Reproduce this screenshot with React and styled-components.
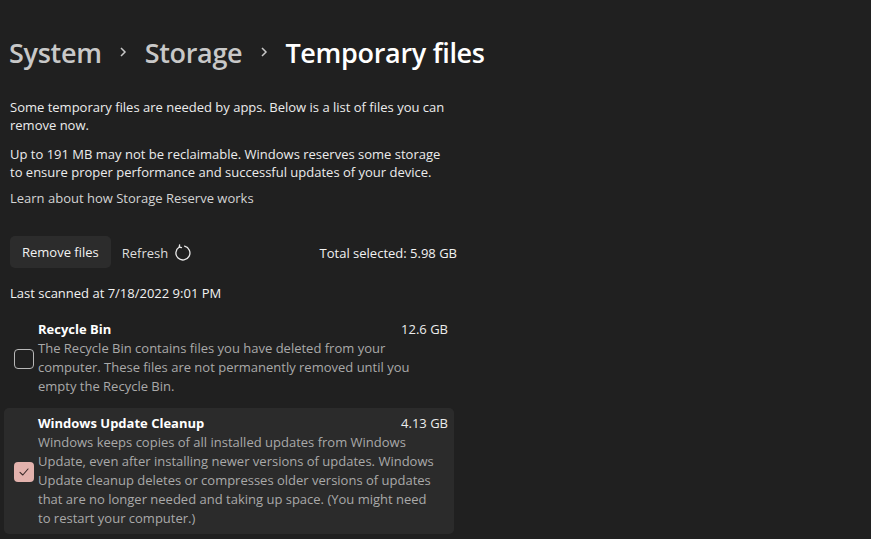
import React from "react";
import styled, { createGlobalStyle } from "styled-components";

const Global = createGlobalStyle`
  html, body { margin: 0; padding: 0; background: #202020; }
  body { font-family: "Segoe UI", "Open Sans", sans-serif; color: #ffffff; }
`;

const Page = styled.div`
  width: 871px;
  height: 539px;
  overflow: hidden;
  background: #202020;
  box-sizing: border-box;
  padding: 33px 0 0 0;
`;

const Column = styled.div`
  width: 460px;
  display: flex;
  flex-direction: column;
`;

const Breadcrumb = styled.div`
  display: flex;
  align-items: center;
  white-space: nowrap;
  width: 600px;
  padding-left: 9px;
  height: 38px;
  font-size: 27px;
  font-weight: 600;
  letter-spacing: -0.3px;
`;

const Crumb = styled.span`
  color: ${(p) => (p.$current ? "#ffffff" : "#c8c8c8")};
`;

const Chevron = styled.span`
  display: inline-flex;
  width: 43px;
  justify-content: center;
  color: #c8c8c8;
`;

const Paragraph = styled.p`
  margin: ${(p) => p.$mt || 0}px 0 0 10px;
  font-size: 13px;
  line-height: 18px;
  color: #ececec;
  width: ${(p) => p.$w || 450}px;
`;

const Link = styled.div`
  margin: 8px 0 0 10px;
  font-size: 13px;
  line-height: 18px;
  color: #d4d4d4;
`;

const Toolbar = styled.div`
  display: flex;
  align-items: center;
  margin-top: 29px;
  padding-left: 10px;
  height: 32px;
`;

const Button = styled.div`
  background: #2c2c2c;
  border-radius: 5px;
  height: 32px;
  padding: 0 12px;
  display: flex;
  align-items: center;
  font-size: 13px;
  color: #f2f2f2;
`;

const RefreshBtn = styled.div`
  display: flex;
  align-items: center;
  gap: 6px;
  margin-left: 11px;
  font-size: 13px;
  color: #dedede;
  padding-top: 2px;
`;

const Total = styled.div`
  margin-left: auto;
  font-size: 13px;
  color: #f2f2f2;
  padding-top: 2px;
  margin-right: 3px;
`;

const Scanned = styled.div`
  margin: 16px 0 0 10px;
  font-size: 13px;
  line-height: 18px;
  color: #f2f2f2;
`;

const List = styled.div`
  margin: 12px 0 0 4px;
  width: 450px;
  display: flex;
  flex-direction: column;
  gap: 6px;
`;

const Item = styled.div`
  display: flex;
  align-items: center;
  padding: 6px 6px 6px 10px;
  border-radius: 5px;
  background: ${(p) => (p.$hover ? "#2b2b2b" : "transparent")};
`;

const Box = styled.div`
  width: 20px;
  height: 20px;
  flex: none;
  box-sizing: border-box;
  border-radius: 4px;
  border: ${(p) => (p.$checked ? "none" : "1px solid #b8b8b8")};
  background: ${(p) => (p.$checked ? "#e3b2ad" : "transparent")};
  display: flex;
  align-items: center;
  justify-content: center;
  margin-top: ${(p) => p.$mt || 0}px;
`;

const Body = styled.div`
  flex: 1;
  margin-left: 4px;
  display: flex;
  flex-direction: column;
`;

const Head = styled.div`
  display: flex;
  justify-content: space-between;
  font-size: 13px;
  line-height: 19px;
`;

const Title = styled.span`
  font-weight: 700;
  color: #ffffff;
`;

const Size = styled.span`
  color: #ececec;
`;

const Desc = styled.div`
  font-size: 13px;
  line-height: 19px;
  color: #a9a9a9;
  padding-right: 12px;
`;

const RefreshIcon = () => (
  <svg width="18" height="18" viewBox="0 0 18 18" fill="none">
    <path
      d="M10.6 2.2 A7 7 0 1 1 5.3 3.0"
      stroke="#e8e8e8"
      strokeWidth="1.3"
      strokeLinecap="round"
    />
    <path
      d="M5.6 0.8 L5.3 3.0 L7.5 3.6"
      stroke="#e8e8e8"
      strokeWidth="1.3"
      strokeLinecap="round"
      strokeLinejoin="round"
    />
  </svg>
);

const Check = () => (
  <svg width="12" height="12" viewBox="0 0 12 12" fill="none">
    <path
      d="M2 6.3 L4.8 9 L10 3"
      stroke="#3a2a29"
      strokeWidth="1.1"
      strokeLinecap="round"
      strokeLinejoin="round"
    />
  </svg>
);

const ChevronIcon = () => (
  <svg width="10" height="12" viewBox="0 0 10 12">
    <path d="M3 2 L7 6 L3 10" stroke="#c8c8c8" strokeWidth="1.5" fill="none" />
  </svg>
);

export default function App() {
  return (
    <>
      <Global />
      <Page>
        <Column>
          <Breadcrumb>
            <Crumb>System</Crumb>
            <Chevron>
              <ChevronIcon />
            </Chevron>
            <Crumb>Storage</Crumb>
            <Chevron>
              <ChevronIcon />
            </Chevron>
            <Crumb $current>Temporary files</Crumb>
          </Breadcrumb>
          <Paragraph $mt={27} $w={448}>
            Some temporary files are needed by apps. Below is a list of files you can remove now.
          </Paragraph>
          <Paragraph $mt={11} $w={445}>
            Up to 191 MB may not be reclaimable. Windows reserves some storage to ensure proper performance and successful updates of your device.
          </Paragraph>
          <Link>Learn about how Storage Reserve works</Link>
          <Toolbar>
            <Button>Remove files</Button>
            <RefreshBtn>
              Refresh
              <RefreshIcon />
            </RefreshBtn>
            <Total>Total selected: 5.98 GB</Total>
          </Toolbar>
          <Scanned>Last scanned at 7/18/2022 9:01 PM</Scanned>
          <List>
            <Item>
              <Box $mt={2} />
              <Body>
                <Head>
                  <Title>Recycle Bin</Title>
                  <Size>12.6 GB</Size>
                </Head>
                <Desc>
                  The Recycle Bin contains files you have deleted from your computer. These files are not permanently removed until you empty the Recycle Bin.
                </Desc>
              </Body>
            </Item>
            <Item $hover>
              <Box $checked $mt={2}>
                <Check />
              </Box>
              <Body>
                <Head>
                  <Title>Windows Update Cleanup</Title>
                  <Size>4.13 GB</Size>
                </Head>
                <Desc>
                  Windows keeps copies of all installed updates from Windows Update, even after installing newer versions of updates. Windows Update cleanup deletes or compresses older versions of updates that are no longer needed and taking up space. (You might need to restart your computer.)
                </Desc>
              </Body>
            </Item>
          </List>
        </Column>
      </Page>
    </>
  );
}
